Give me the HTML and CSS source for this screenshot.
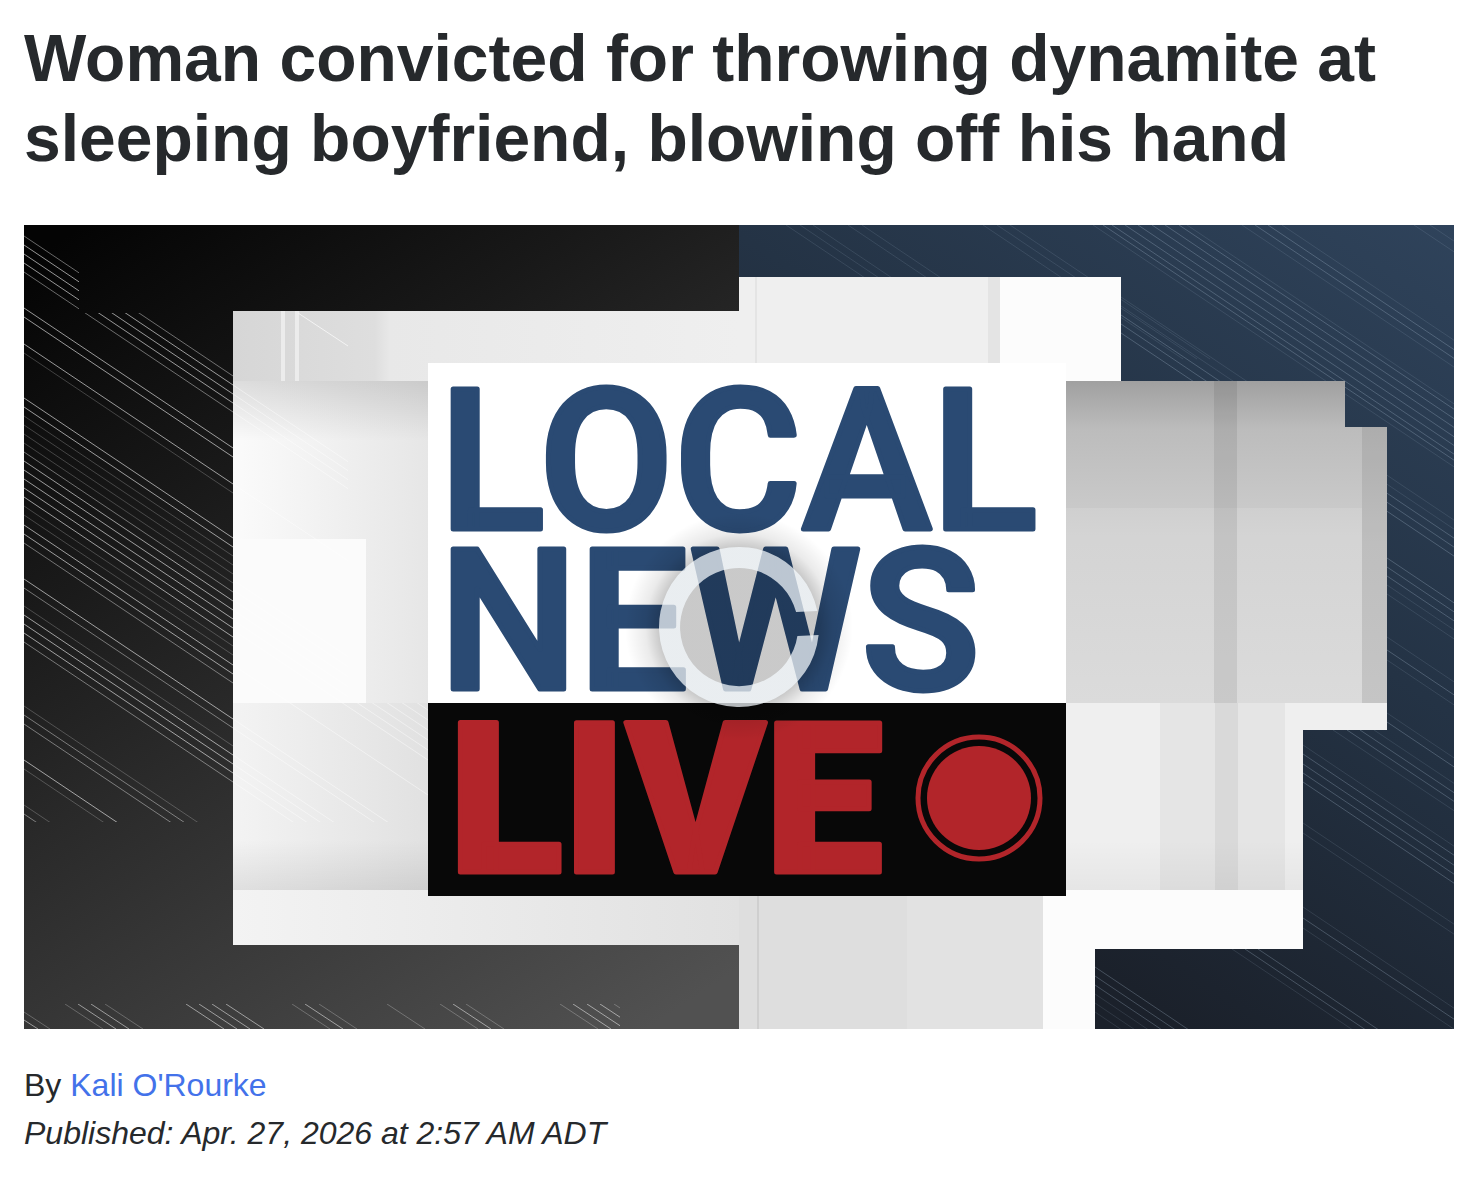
FILE: index.html
```html
<!DOCTYPE html>
<html lang="en">
<head>
<meta charset="utf-8">
<meta name="viewport" content="width=device-width, initial-scale=1">
<title>Woman convicted for throwing dynamite at sleeping boyfriend, blowing off his hand</title>
<link rel="stylesheet" href="styles.css">
</head>
<body>
<article class="article">
  <h1 class="headline">Woman convicted for throwing dynamite at sleeping boyfriend, blowing off his hand</h1>

  <figure class="player">
    <svg class="poster" viewBox="24 225 1430 804" role="img" aria-label="Local News Live">
      <defs>
        <linearGradient id="black" gradientUnits="userSpaceOnUse" x1="60" y1="240" x2="600" y2="1060">
          <stop offset="0" stop-color="#040404"/><stop offset=".3" stop-color="#1a1a1a"/><stop offset="1" stop-color="#515151"/>
        </linearGradient>
        <linearGradient id="navy" gradientUnits="userSpaceOnUse" x1="1000" y1="900" x2="1454" y2="225">
          <stop offset="0" stop-color="#1b212b"/><stop offset=".5" stop-color="#243345"/><stop offset="1" stop-color="#2f435b"/>
        </linearGradient>
        <linearGradient id="strip" x1="0" x2="1" y1="0" y2="0">
          <stop offset="0" stop-color="#d6d6d6"/><stop offset=".28" stop-color="#dedede"/><stop offset=".31" stop-color="#e8e8e8"/><stop offset="1" stop-color="#efefef"/>
        </linearGradient>
        <linearGradient id="left" x1="0" x2="1" y1="0" y2="0">
          <stop offset="0" stop-color="#fbfbfb"/><stop offset="1" stop-color="#e6e6e6"/>
        </linearGradient>
        <linearGradient id="lower" x1="0" x2="1" y1="0" y2="0">
          <stop offset="0" stop-color="#f3f3f3"/><stop offset="1" stop-color="#e1e1e1"/>
        </linearGradient>
        <linearGradient id="shadeDown" x1="0" x2="0" y1="0" y2="1">
          <stop offset="0" stop-color="#000" stop-opacity=".12"/><stop offset="1" stop-color="#000" stop-opacity="0"/>
        </linearGradient>
        <linearGradient id="shadeUp" x1="0" x2="0" y1="1" y2="0">
          <stop offset="0" stop-color="#000" stop-opacity=".08"/><stop offset="1" stop-color="#000" stop-opacity="0"/>
        </linearGradient>
        <linearGradient id="right" x1="0" x2="0" y1="0" y2="1">
          <stop offset="0" stop-color="#a0a0a0"/><stop offset=".15" stop-color="#bcbcbc"/><stop offset=".5" stop-color="#cfcfcf"/><stop offset="1" stop-color="#d6d6d6"/>
        </linearGradient>
        <radialGradient id="halo">
          <stop offset="0" stop-color="#000" stop-opacity=".21"/><stop offset=".7" stop-color="#000" stop-opacity=".21"/><stop offset=".82" stop-color="#000" stop-opacity=".08"/><stop offset="1" stop-color="#000" stop-opacity="0"/>
        </radialGradient>
        <clipPath id="clipBlack"><path d="M24 225H79V313H233V822H24Z"/></clipPath>
        <clipPath id="clipFoot"><path d="M24 1004H620V1029H24Z"/></clipPath>
        <clipPath id="clipNavy"><path d="M739 225H1454V1029H1095V949H1303V730H1387V427H1345V381H1121V277H739Z"/></clipPath>
        <clipPath id="clipPale"><path d="M233 381H348V703H428V822H233Z"/></clipPath>
      </defs>

      <rect x="24" y="225" width="715" height="804" fill="url(#black)"/>
      <rect x="739" y="225" width="715" height="804" fill="url(#navy)"/>

      <!-- pinstripes on the black side -->
      <g clip-path="url(#clipBlack)" fill="none" stroke="#fff">
        <path stroke-opacity=".58" d="M24 245l209 140M24 254l209 140M24 263l209 140M24 308l209 140M24 317l209 140M24 344l209 140M24 398l209 140M24 407l209 140M24 461l209 140M24 470l209 140M24 479l209 140M24 488l209 140M24 497l209 140M24 525l209 140M24 534l209 140M24 579l209 140M24 615l209 140M24 624l209 140M24 633l209 140M24 760l209 140"/>
        <path stroke-opacity=".4" d="M24 236l209 140M24 272l209 140M24 452l209 140M24 543l209 140M24 588l209 140M24 642l209 140M24 715l209 140M24 724l209 140M24 814l209 140"/>
        <path stroke-opacity=".22" d="M24 353l209 140M24 416l209 140M24 425l209 140M24 434l209 140M24 443l209 140M24 506l209 140M24 515l209 140M24 606l209 140M24 706l209 140M24 769l209 140M24 805l209 140"/>
      </g>
      <g clip-path="url(#clipFoot)" fill="none" stroke="#fff">
        <path stroke-opacity=".5" d="M78 1004l38 25M91 1004l38 25M186 1004l38 25M199 1004l38 25M212 1004l38 25M226 1004l38 25M305 1004l38 25M453 1004l38 25M573 1004l38 25M587 1004l38 25M600 1004l38 25M24 1020l14 9"/>
        <path stroke-opacity=".25" d="M65 1004l38 25M105 1004l38 25M292 1004l38 25M319 1004l38 25M387 1004l38 25M440 1004l38 25M466 1004l38 25M560 1004l38 25M614 1004l38 25M24 1012l26 17"/>
      </g>

      <!-- pinstripes on the navy side -->
      <g clip-path="url(#clipNavy)" fill="none" stroke="#a9bed2">
        <path stroke-opacity=".3" d="M1103 225l400 268M1112 225l400 268M1125 225l400 268M1138 225l400 268M1152 225l400 268M1165 225l400 268M1179 225l400 268M1255 225l400 268M1268 225l400 268M1121 315l400 268M1121 324l400 268M1121 333l400 268M1387 558l100 67M1387 567l100 67M1387 576l100 67M1387 650l100 67M1387 722l100 67M1347 730l150 100M1360 730l150 100M1303 754l200 134M1303 764l200 134M1303 773l200 134M1303 782l200 134M1303 918l200 134M1245 949l200 134M1258 949l200 134M1095 976l200 134M1095 985l200 134M1095 967l200 134"/>
        <path stroke-opacity=".15" d="M786 225l200 134M800 225l200 134M813 225l200 134M848 225l200 134M862 225l200 134M983 225l200 134M997 225l200 134M1010 225l200 134M1093 225l400 268M1187 225l400 268M1242 225l400 268M1282 225l400 268M1414 225l100 67M1430 225l100 67M1121 297l400 268M1121 306l400 268M1387 585l100 67M1387 594l100 67M1387 637l100 67M1387 660l100 67M1387 713l100 67M1333 730l150 100M1374 730l150 100M1303 745l200 134M1303 823l200 134M1303 833l200 134M1303 907l200 134M1303 928l200 134M1232 949l200 134M1095 994l200 134M1095 1003l200 134M1095 1012l200 134"/>
      </g>

      <!-- stepped white panels -->
      <rect x="233" y="311" width="506" height="70" fill="url(#strip)"/>
      <path fill="#ececec" d="M281 311h4v70h-4ZM295 311h4v70h-4Z"/>
      <path fill="none" stroke="#f4f4f4" d="M298 313l50 33"/>
      <rect x="739" y="277" width="261" height="104" fill="#efefef"/>
      <path fill="#e4e4e4" d="M755 277h2v104h-2ZM988 277h12v104h-12Z"/>
      <rect x="1000" y="277" width="121" height="104" fill="#fcfcfc"/>

      <rect x="233" y="381" width="196" height="322" fill="url(#left)"/>
      <rect x="233" y="381" width="196" height="60" fill="url(#shadeDown)"/>
      <rect x="233" y="539" width="133" height="164" fill="#fbfbfb"/>
      <rect x="233" y="703" width="196" height="187" fill="url(#lower)"/>
      <g clip-path="url(#clipPale)" fill="none" stroke="#fff" stroke-opacity=".45">
        <path d="M233 385l195 130M233 394l195 130M233 403l195 130M233 412l195 130M233 484l195 130M233 580l195 130M233 590l195 130M233 600l195 130M233 610l195 130M233 620l195 130M233 630l195 130M233 665l195 130M233 719l195 130M233 728l195 130M233 755l195 130M233 764l195 130M233 773l195 130M233 782l195 130"/>
      </g>
      <rect x="233" y="840" width="196" height="50" fill="url(#shadeUp)"/>
      <rect x="233" y="890" width="506" height="55" fill="url(#lower)"/>

      <path fill="url(#right)" d="M1066 381H1345V427H1387V703H1066Z"/>
      <rect x="1066" y="508" width="296" height="195" fill="#fff" fill-opacity=".12"/>
      <path fill="#000" fill-opacity=".08" d="M1214 381h23v322h-23ZM1362 427h25v276h-25Z"/>
      <path fill="#efefef" d="M1066 703H1387V730H1303V890H1066Z"/>
      <rect x="1160" y="703" width="125" height="187" fill="#e5e5e5"/>
      <rect x="1215" y="703" width="23" height="187" fill="#d9d9d9"/>
      <rect x="1066" y="840" width="237" height="50" fill="url(#shadeUp)" fill-opacity=".5"/>
      <rect x="739" y="890" width="305" height="139" fill="#dedede"/>
      <path fill="#cfcfcf" d="M757 890h2v139h-2Z"/>
      <path fill="#e2e2e2" d="M907 890h137v139h-137Z"/>
      <path fill="#fcfcfc" d="M1043 890H1303V949H1095V1029H1043Z"/>

      <!-- logo -->
      <rect x="428" y="363" width="638" height="341" fill="#fff"/>
      <rect x="428" y="703" width="638" height="193" fill="#080808"/>
      <text class="logo-word logo-word--blue" x="439" y="529">LOCAL</text>
      <text class="logo-word logo-word--blue" x="439" y="689">NEWS</text>
      <text class="logo-word logo-word--red" x="449" y="872">LIVE</text>
      <circle cx="979" cy="798" r="61" fill="none" stroke="#b2252a" stroke-width="5"/>
      <circle cx="979" cy="798" r="52" fill="#b2252a"/>

      <!-- loading ring -->
      <circle cx="739" cy="627" r="114" fill="url(#halo)"/>
      <path fill="#f6fbff" fill-opacity=".73" d="M817.4 611A80 80 0 1 0 818.6 635L797.4 636A59 59 0 1 1 796.1 612Z"/>
    </svg>
  </figure>

  <div class="meta">
    <p class="byline">By <a class="author" href="#">Kali O'Rourke</a></p>
    <p class="published"><time datetime="2026-04-27T02:57-03:00">Published: Apr. 27, 2026 at 2:57 AM ADT</time></p>
  </div>
</article>
</body>
</html>
```
FILE: styles.css
```css
* {
  box-sizing: border-box;
}

body {
  margin: 0;
  background: #fff;
  color: #26292c;
  font-family: "Liberation Sans", Arial, sans-serif;
  font-size: 32px;
  line-height: 48px;
}

.article {
  padding: 18px 24px 32px;
}

.headline {
  margin: 0 0 47px;
  font-size: 66px;
  font-weight: 700;
  line-height: 80px;
}

.player {
  margin: 0;
}

.poster {
  display: block;
  width: 100%;
  height: auto;
}

.logo-word {
  font-family: Roboto, sans-serif;
  stroke-linejoin: round;
}

.logo-word--blue {
  fill: #2a4a73;
  stroke: #2a4a73;
  stroke-width: 5px;
  font-size: 196px;
  font-weight: 500;
}

.logo-word--red {
  fill: #b2252a;
  stroke: #b2252a;
  stroke-width: 5px;
  font-size: 210px;
  font-weight: 900;
}

.meta {
  padding-top: 32px;
}

.byline,
.published {
  margin: 0;
}

.published {
  font-style: italic;
}

.author {
  color: #4372ea;
  text-decoration: none;
}
```
